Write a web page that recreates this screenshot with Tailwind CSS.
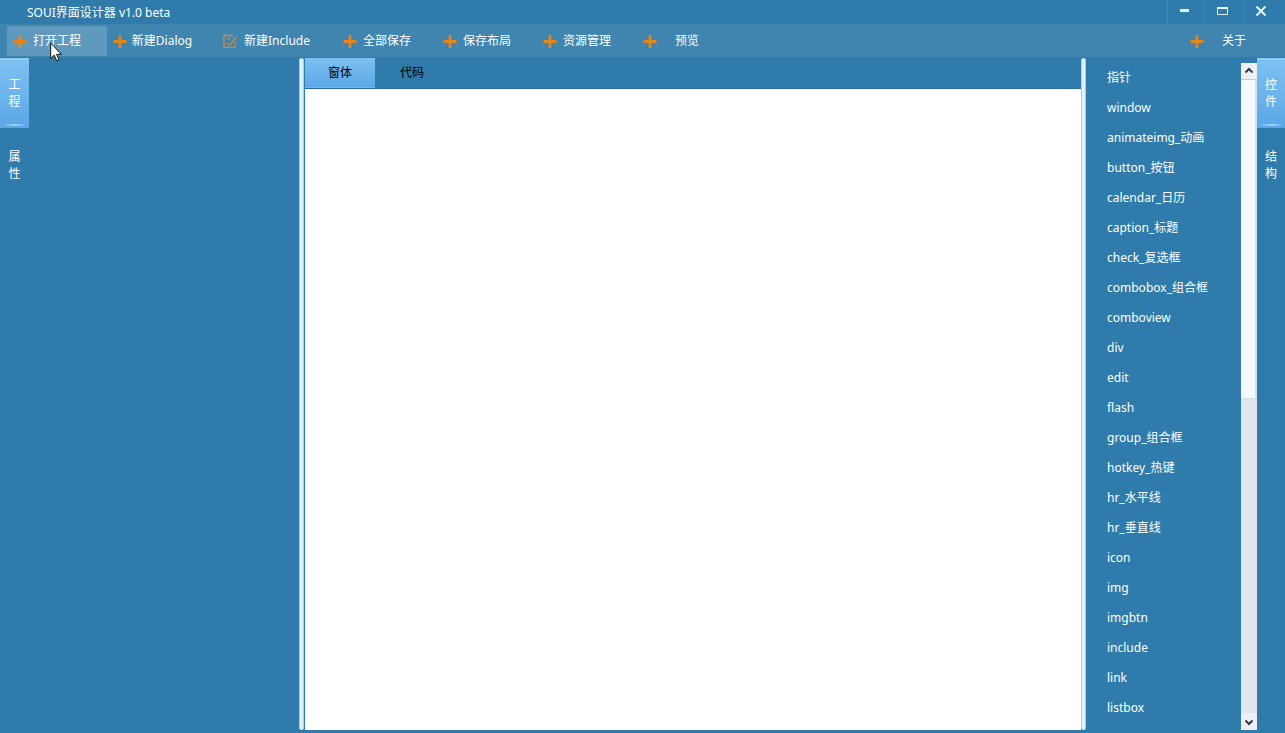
<!DOCTYPE html>
<html lang="zh-CN">
<head>
<meta charset="utf-8">
<meta name="viewport" content="width=device-width, initial-scale=1">
<title>SOUI界面设计器 v1.0 beta</title>
<script src="https://cdn.jsdelivr.net/npm/@tailwindcss/browser@4"></script>
</head>
<body class="flex h-screen flex-col overflow-hidden bg-[#2f7bab] font-['Noto_Sans','Noto_Sans_CJK_SC',sans-serif] text-xs text-white">
<svg class="hidden" aria-hidden="true">
  <symbol id="plus" viewBox="0 0 14 14"><path d="M7 1v13M0.5 7.500h13" fill="none" stroke="#e58418" stroke-width="2.8"/></symbol>
  <symbol id="edit" viewBox="0 0 14 14"><path d="M10 1.500H1v12h11V8M4 5h3M4 9.500l2.500 1.500L13.500 3" fill="none" stroke="#c98a45" stroke-width="1.400"/></symbol>
</svg>

<header class="flex h-6 shrink-0 items-center justify-between pl-[27px]">
  <h1 class="pt-0.5">SOUI界面设计器 v1.0 beta</h1>
  <div class="flex h-full">
    <button type="button" aria-label="最小化" class="flex h-full w-[38px] items-center border-l border-[#4486b0] pl-[11px]">
      <svg class="h-3 w-3" viewBox="0 0 12 12"><path d="M1 4.500h9" stroke="#e6f7ff" stroke-width="3"/></svg>
    </button>
    <button type="button" aria-label="最大化" class="flex h-full w-[38px] items-center border-l border-[#3a81ae] pl-[11px]">
      <svg class="h-3 w-3" viewBox="0 0 12 12"><path d="M.5 1.500h10v7H.5z" fill="none" stroke="#e6f7ff"/><path d="M0 2h11" stroke="#e6f7ff" stroke-width="2"/></svg>
    </button>
    <button type="button" aria-label="关闭" class="flex h-full w-[42px] items-center border-l border-[#3a81ae] pl-[11px]">
      <svg class="h-3 w-3" viewBox="0 0 12 12"><path d="M1.500 0.500l9 9M10.500 0.500l-9 9" stroke="#e6f7ff" stroke-width="2"/></svg>
    </button>
  </div>
</header>

<nav aria-label="工具栏" class="flex h-[33px] shrink-0 items-center bg-[#4084b0] pr-px pl-[7px] whitespace-nowrap">
  <button type="button" class="grid h-[30px] w-[100px] grid-cols-[14px_1fr_14px] items-center bg-[#6099be] px-1.5"><svg class="h-3.5 w-3.5"><use href="#plus"/></svg><span>打开工程</span></button>
  <button type="button" class="grid h-[30px] w-[110px] grid-cols-[14px_1fr_14px] items-center px-1.5"><svg class="h-3.5 w-3.5"><use href="#plus"/></svg><span>新建Dialog</span></button>
  <button type="button" class="grid h-[30px] w-[120px] grid-cols-[14px_1fr_14px] items-center px-1.5"><svg class="h-3.5 w-3.5"><use href="#edit"/></svg><span>新建Include</span></button>
  <button type="button" class="grid h-[30px] w-[100px] grid-cols-[14px_1fr_14px] items-center px-1.5"><svg class="h-3.5 w-3.5"><use href="#plus"/></svg><span>全部保存</span></button>
  <button type="button" class="grid h-[30px] w-[100px] grid-cols-[14px_1fr_14px] items-center px-1.5"><svg class="h-3.5 w-3.5"><use href="#plus"/></svg><span>保存布局</span></button>
  <button type="button" class="grid h-[30px] w-[100px] grid-cols-[14px_1fr_14px] items-center px-1.5"><svg class="h-3.5 w-3.5"><use href="#plus"/></svg><span>资源管理</span></button>
  <button type="button" class="grid h-[30px] w-[100px] grid-cols-[14px_1fr_14px] items-center px-1.5"><svg class="h-3.5 w-3.5"><use href="#plus"/></svg><span>预览</span></button>
  <button type="button" class="ml-auto grid h-[30px] w-[100px] grid-cols-[14px_1fr_14px] items-center px-1.5"><svg class="h-3.5 w-3.5"><use href="#plus"/></svg><span>关于</span></button>
</nav>

<main class="flex min-h-0 flex-1 pt-px pb-[3px]">
  <aside class="flex w-[299px] shrink-0">
    <div role="tablist" aria-label="左侧面板" class="flex w-[29px] flex-col gap-[3px]">
      <button type="button" role="tab" aria-selected="true" class="flex h-[70px] flex-col items-center border-t-2 border-[#8fcbf5] bg-linear-to-b from-[#7dc1f2] to-[#5ba6e6] pb-0.5 leading-[17px]"><span class="my-auto w-3 pt-px">工程</span><span class="h-0.5 w-5 bg-linear-to-r from-[#6cb3ec] via-[#a5d6f9] to-[#6cb3ec]"></span></button>
      <button type="button" role="tab" aria-selected="false" class="flex h-[70px] flex-col items-center pb-0.5 leading-[17px]"><span class="my-auto w-3">属性</span></button>
    </div>
  </aside>

  <div class="w-[5px] shrink-0 rounded-sm border-x border-[#a9cfe6] bg-[#dff1fb]"></div>

  <section class="ml-px flex min-w-0 flex-1 flex-col">
    <div role="tablist" aria-label="视图" class="flex h-[31px] shrink-0 border-b border-[#286c9c] text-black">
      <button type="button" role="tab" aria-selected="true" class="h-[30px] w-[70px] border-b border-[#6cb7f0] bg-linear-to-b from-[#7dc1f2] to-[#5ba6e6] pt-px">窗体</button>
      <button type="button" role="tab" aria-selected="false" class="h-[30px] w-[74px]">代码</button>
    </div>
    <div role="tabpanel" aria-label="窗体" class="flex-1 bg-white"></div>
  </section>

  <div class="w-[5px] shrink-0 rounded-sm border-x border-[#a9cfe6] bg-[#dff1fb]"></div>

  <aside class="flex w-[199px] shrink-0">
    <ul class="min-w-0 flex-1 overflow-hidden pt-[5px] pl-[21px] leading-[30px]">
      <li>指针</li><li>window</li><li>animateimg_动画</li><li>button_按钮</li><li>calendar_日历</li><li>caption_标题</li><li>check_复选框</li><li>combobox_组合框</li><li>comboview</li><li>div</li><li>edit</li><li>flash</li><li>group_组合框</li><li>hotkey_热键</li><li>hr_水平线</li><li>hr_垂直线</li><li>icon</li><li>img</li><li>imgbtn</li><li>include</li><li>link</li><li>listbox</li>
    </ul>
    <div class="mt-[5px] flex w-4 flex-col bg-[#e0e6ec]">
      <button type="button" aria-label="向上滚动" class="flex h-[17px] items-center justify-center border-b border-[#b9cedd] bg-[#edf1f5]"><svg class="h-2.5 w-2.5" viewBox="0 0 10 10"><path d="M1.500 6.500L5 3l3.500 3.500" fill="none" stroke="#333a42" stroke-width="2"/></svg></button>
      <div class="min-h-0 flex-1"><div class="h-[319px] max-h-full border-r-2 border-b border-[#cfe3f1] bg-[#f3f9fe]"></div></div>
      <button type="button" aria-label="向下滚动" class="flex h-[17px] items-center justify-center bg-[#edf1f5]"><svg class="h-2.5 w-2.5" viewBox="0 0 10 10"><path d="M1.500 3.500L5 7l3.500-3.500" fill="none" stroke="#333a42" stroke-width="2"/></svg></button>
    </div>
    <div role="tablist" aria-label="右侧面板" class="flex w-[28px] flex-col gap-[3px]">
      <button type="button" role="tab" aria-selected="true" class="flex h-[70px] flex-col items-center border-t-2 border-[#8fcbf5] bg-linear-to-b from-[#7dc1f2] to-[#5ba6e6] pb-0.5 leading-[17px]"><span class="my-auto w-3 pt-px">控件</span><span class="h-0.5 w-5 bg-linear-to-r from-[#6cb3ec] via-[#a5d6f9] to-[#6cb3ec]"></span></button>
      <button type="button" role="tab" aria-selected="false" class="flex h-[70px] flex-col items-center pb-0.5 leading-[17px]"><span class="my-auto w-3">结构</span></button>
    </div>
  </aside>
</main>

<!-- Mouse pointer hovering over the first toolbar button -->
<svg class="pointer-events-none absolute top-[42px] left-[50px] h-5 w-3" viewBox="0 0 12 20" aria-hidden="true"><path d="M.7 1v15.500l3.500-3.300 2.500 5.600 2.300-1-2.400-5.500h4.700z" fill="#fff" stroke="#111" stroke-width="1"/></svg>
</body>
</html>
